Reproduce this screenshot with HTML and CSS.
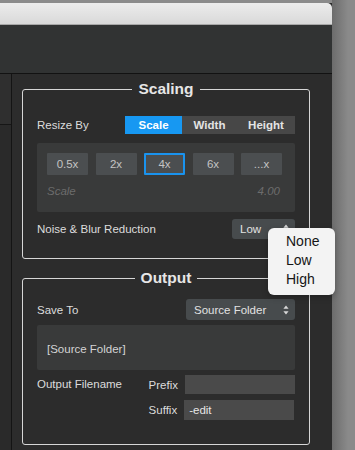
FILE: index.html
```html
<!DOCTYPE html>
<html>
<head>
    <title>Scaling Settings</title>
    <link rel="stylesheet" href="styles.css">
</head>
<body>
<div class="screen">
    <div class="window">
        <div class="titlebar"></div>
        <div class="toolbar"></div>
        <div class="main">
            <div class="sidebar">
                <div class="sidebar-top"></div>
            </div>
            <div class="panel">
                <fieldset class="group scaling">
                    <legend>Scaling</legend>
                    <div class="row resize-row">
                        <span class="label">Resize By</span>
                        <div class="segmented">
                            <span class="seg active">Scale</span>
                            <span class="seg seg-width">Width</span>
                            <span class="seg seg-height">Height</span>
                        </div>
                    </div>
                    <div class="scale-box">
                        <div class="presets">
                            <span class="preset">0.5x</span>
                            <span class="preset">2x</span>
                            <span class="preset selected">4x</span>
                            <span class="preset">6x</span>
                            <span class="preset">...x</span>
                        </div>
                        <div class="scale-info">
                            <span>Scale</span>
                            <span>4.00</span>
                        </div>
                    </div>
                    <div class="row noise-row">
                        <span class="label">Noise &amp; Blur Reduction</span>
                        <div class="select low-select">
                            <span>Low</span>
                            <svg class="arrows" width="6" height="10" viewBox="0 0 6 10">
                                <path d="M3 0.5 L5.6 3.8 H0.4 Z M3 9.5 L5.6 6.2 H0.4 Z" fill="#d8d8d8"/>
                            </svg>
                            <div class="menu">
                                <div class="menu-item">None</div>
                                <div class="menu-item">Low</div>
                                <div class="menu-item">High</div>
                            </div>
                        </div>
                    </div>
                </fieldset>

                <fieldset class="group output">
                    <legend>Output</legend>
                    <div class="row save-row">
                        <span class="label">Save To</span>
                        <div class="select folder-select">
                            <span>Source Folder</span>
                            <svg class="arrows" width="6" height="10" viewBox="0 0 6 10">
                                <path d="M3 0.5 L5.6 3.8 H0.4 Z M3 9.5 L5.6 6.2 H0.4 Z" fill="#d8d8d8"/>
                            </svg>
                        </div>
                    </div>
                    <div class="path-box">[Source Folder]</div>
                    <div class="filename">
                        <span class="label">Output Filename</span>
                        <div class="fields">
                            <div class="field">
                                <span class="label">Prefix</span>
                                <div class="input"></div>
                            </div>
                            <div class="field">
                                <span class="label">Suffix</span>
                                <div class="input">-edit</div>
                            </div>
                        </div>
                    </div>
                </fieldset>
            </div>
        </div>
    </div>
    <div class="backdrop"></div>
</div>
</body>
</html>
```

FILE: styles.css
```css
body {
    margin: 0;
    padding: 0;
    background-color: #8b8b8b;
    font-family: "Liberation Sans", Arial, sans-serif;
    font-size: 11.5px;
    color: #dedede;
}
.screen {
    display: flex;
    height: 450px;
    overflow: hidden;
}
.window {
    width: 332px;
    flex-shrink: 0;
    margin-top: 3px;
    display: flex;
    flex-direction: column;
    background-color: #2c2c2c;
    position: relative;
    z-index: 1;
}
.backdrop {
    flex: 1;
    background: linear-gradient(to right, #6c6c6c, #8a8a8a 70%);
}
.titlebar {
    height: 21px;
    border-top-right-radius: 5px;
    background: linear-gradient(#ececec, #d9d9d9);
    border-bottom: 1px solid #a8a8a8;
}
.toolbar {
    height: 48px;
    background-color: #313333;
    border-bottom: 1px solid #121212;
}
.main {
    flex: 1;
    display: flex;
}
.sidebar {
    width: 11px;
    flex-shrink: 0;
    background-color: #2a2a2a;
    border-right: 1px solid #141414;
}
.sidebar-top {
    height: 50px;
    background-color: #2f2f2f;
    border-bottom: 1px solid #161616;
}
.panel {
    flex: 1;
    min-width: 0;
    padding: 6px 22px 0 10px;
    display: flex;
    flex-direction: column;
    gap: 10px;
}
.group {
    margin: 0;
    padding: 0 14px;
    border: 1px solid #d6d6d6;
    border-radius: 3px;
    min-width: 0;
}
.group legend {
    margin: 0 auto;
    padding: 0 6px;
    font-size: 15.5px;
    font-weight: bold;
    line-height: 18px;
    color: #e6e6e6;
}
.row {
    display: flex;
    align-items: center;
    justify-content: space-between;
}
.label {
    color: #dcdcdc;
}
.resize-row {
    margin-top: 18px;
}
.segmented {
    display: flex;
    height: 18px;
    background-color: #474747;
}
.seg {
    display: flex;
    align-items: center;
    justify-content: center;
    width: 57px;
    font-weight: bold;
    font-size: 11.5px;
    color: #e4e4e4;
}
.seg-width {
    width: 55px;
}
.seg-height {
    width: 58px;
}
.seg.active {
    background-color: #1798f2;
    color: #ffffff;
}
.scale-box {
    margin-top: 9px;
    height: 69px;
    box-sizing: border-box;
    padding: 10px 15px 0 10px;
    background-color: #393a3a;
    border-radius: 2px;
}
.presets {
    display: grid;
    grid-template-columns: repeat(5, 41px);
    gap: 7.5px;
}
.preset {
    height: 22px;
    display: flex;
    align-items: center;
    justify-content: center;
    box-sizing: border-box;
    background-color: #4b4e50;
    color: #c4c4c4;
    font-size: 11.5px;
    border-radius: 1px;
}
.preset.selected {
    border: 2px solid #1a93ee;
}
.scale-info {
    display: flex;
    justify-content: space-between;
    margin-top: 10px;
    font-style: italic;
    color: #6c6c6c;
}
.noise-row {
    margin-top: 7px;
    margin-bottom: 19px;
}
.select {
    position: relative;
    display: flex;
    align-items: center;
    justify-content: space-between;
    box-sizing: border-box;
    padding: 0 6px 0 8px;
    background-color: #474b4d;
    border-radius: 3px;
    color: #e2e2e2;
}
.low-select {
    width: 63px;
    height: 20px;
}
.folder-select {
    width: 109px;
    height: 21px;
}
.menu {
    position: absolute;
    left: 36px;
    top: 9px;
    width: 67px;
    padding: 4px 0 6px;
    background-color: #f3f3f3;
    border-radius: 6px;
    box-shadow: 0 2px 6px rgba(0, 0, 0, 0.25);
    z-index: 5;
}
.menu-item {
    padding-left: 18px;
    font-size: 14px;
    line-height: 19px;
    color: #151515;
}
.save-row {
    margin-top: 12px;
}
.path-box {
    margin-top: 5px;
    height: 45px;
    display: flex;
    align-items: center;
    padding: 3px 10px 0;
    box-sizing: border-box;
    background-color: #393a3a;
    border-radius: 2px;
    color: #d4d4d4;
}
.filename {
    display: flex;
    justify-content: space-between;
    margin-top: 5px;
    margin-bottom: 24px;
}
.filename > .label {
    line-height: 19px;
}
.fields {
    display: flex;
    flex-direction: column;
    gap: 6px;
}
.field {
    display: flex;
    align-items: center;
    gap: 7px;
}
.input {
    width: 110px;
    height: 20px;
    box-sizing: border-box;
    padding-left: 5px;
    display: flex;
    align-items: center;
    background-color: #4a4a4a;
    color: #e6e6e6;
}
.field:first-child .input {
    height: 19px;
}
```
